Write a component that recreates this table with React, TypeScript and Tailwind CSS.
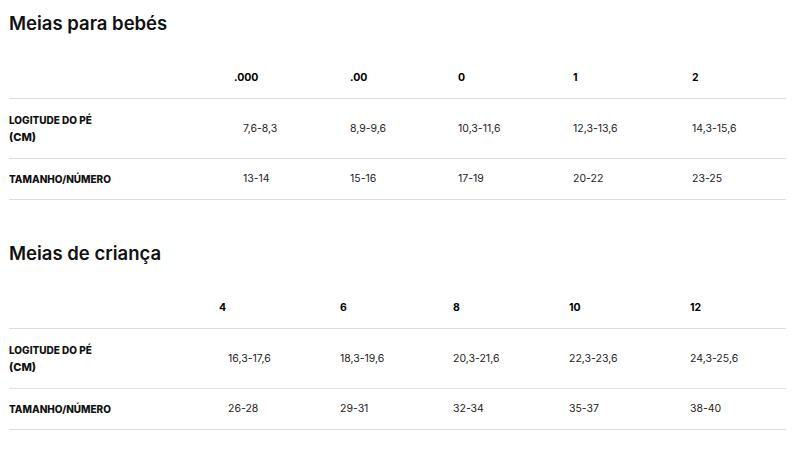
const font = { fontFamily: "Inter, 'Noto Sans', sans-serif" };

type SizeTable = {
  title: string;
  cols: string;
  headers: string[];
  length: string[];
  sizes: string[];
};

const tables: SizeTable[] = [
  {
    title: "Meias para bebés",
    cols: "grid-cols-[225px_116px_108px_115px_119px_1fr]",
    headers: [".000", ".00", "0", "1", "2"],
    length: ["7,6-8,3", "8,9-9,6", "10,3-11,6", "12,3-13,6", "14,3-15,6"],
    sizes: ["13-14", "15-16", "17-19", "20-22", "23-25"],
  },
  {
    title: "Meias de criança",
    cols: "grid-cols-[210px_121px_113px_116px_121px_1fr]",
    headers: ["4", "6", "8", "10", "12"],
    length: ["16,3-17,6", "18,3-19,6", "20,3-21,6", "22,3-23,6", "24,3-25,6"],
    sizes: ["26-28", "29-31", "32-34", "35-37", "38-40"],
  },
];

function DataCells({ values }: { values: string[] }) {
  return (
    <>
      {values.map((v, i) => (
        <div
          key={v}
          className={`text-[10.5px] text-[#222] ${i === 0 ? "pl-[9px]" : ""}`}
        >
          {v}
        </div>
      ))}
    </>
  );
}

function SizeSection({ table }: { table: SizeTable }) {
  return (
    <section className="pb-[30px]">
      <h2 className="pt-[11px] text-[18.5px] leading-[24px] font-semibold text-[#111]">
        {table.title}
      </h2>

      {/* header */}
      <div
        className={`grid ${table.cols} items-center h-[64px] pt-[22px] border-b border-[#dedede]`}
      >
        <div />
        {table.headers.map((h) => (
          <div key={h} className="text-[10.5px] font-bold text-black">
            {h}
          </div>
        ))}
      </div>

      <div
        className={`grid ${table.cols} items-center h-[60px] border-b border-[#dedede]`}
      >
        <div className="text-[10px] leading-[17px] font-extrabold uppercase text-[#111]">
          Logitude do pé
          <br />
          <span className="text-[11px]">(cm)</span>
        </div>
        <DataCells values={table.length} />
      </div>

      <div
        className={`grid ${table.cols} items-center h-[41px] border-b border-[#dedede]`}
      >
        <div className="text-[10px] font-extrabold uppercase text-[#111]">
          Tamanho/Número
        </div>
        <DataCells values={table.sizes} />
      </div>
    </section>
  );
}

export default function App() {
  return (
    <div className="w-[800px] h-[461px] bg-white pl-[9px] pr-[14px] overflow-hidden" style={font}>
      {tables.map((t) => (
        <SizeSection key={t.title} table={t} />
      ))}
    </div>
  );
}
